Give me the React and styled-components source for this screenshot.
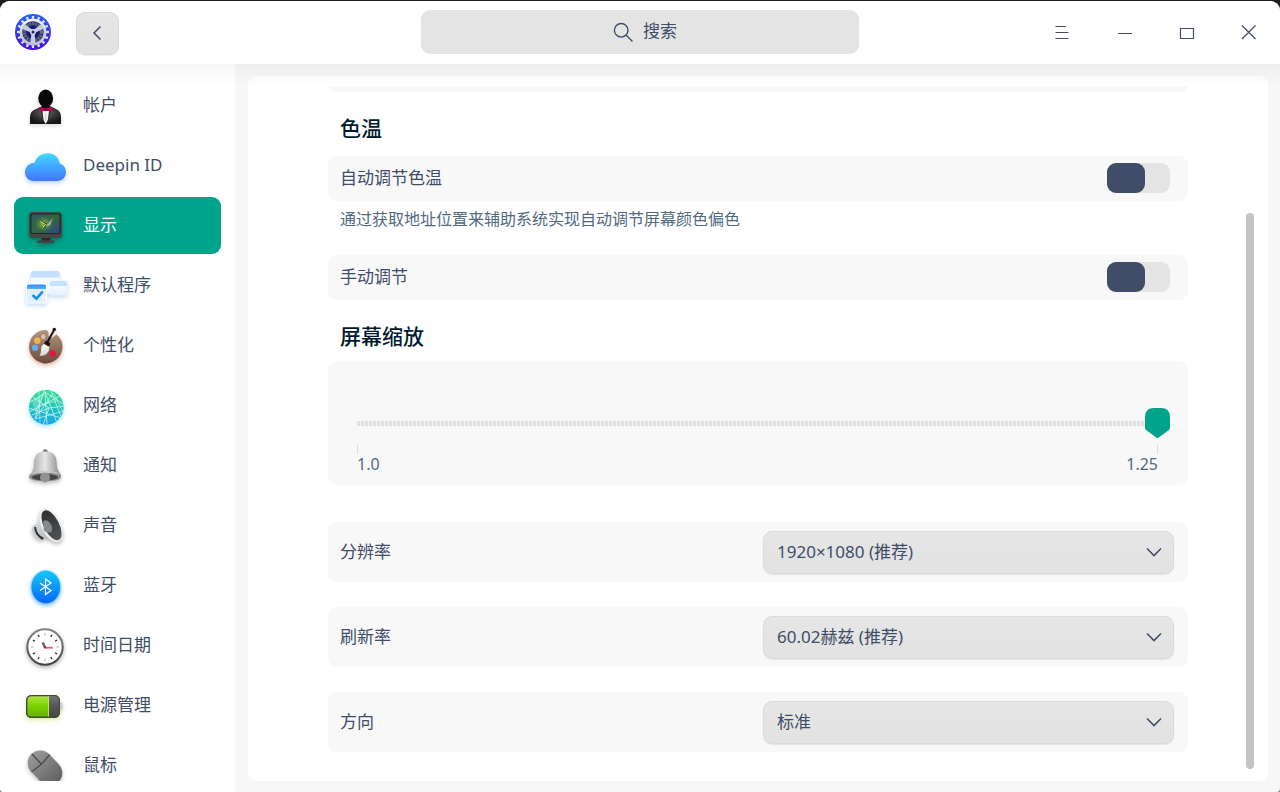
import React, { useState } from "react";
import styled, { createGlobalStyle } from "styled-components";

const INK = "#414d68";
const ACCENT = "#00a48a";
const CARD = "#f8f8f8";

const GlobalStyle = createGlobalStyle`
  * { box-sizing: border-box; }
  html { background: linear-gradient(#1f1c1e 50%, #8c8c8c 50%) fixed; }
  body {
    margin: 0;
    color: ${INK};
    font: 17px/24px "Noto Sans", "Noto Sans CJK SC", sans-serif;
  }
  button, input, select { font: inherit; color: inherit; margin: 0; }
`;

const Window = styled.div`
  display: flex;
  flex-direction: column;
  height: 100vh;
  border-top: 1px solid #1f1c1e;
  border-radius: 10px 10px 4px 4px;
  background: #f7f7f7;
  overflow: hidden;
`;

const TitleBar = styled.header`
  position: relative;
  z-index: 1;
  flex: none;
  display: grid;
  grid-template-columns: 1fr minmax(200px, 438px) 1fr;
  align-items: center;
  height: 63px;
  padding-bottom: 1px;
  background: #fff;
  &::after {
    content: "";
    position: absolute;
    inset: 100% 0 auto 0;
    height: 22px;
    background: linear-gradient(rgba(0, 0, 0, 0.034), rgba(0, 0, 0, 0));
    pointer-events: none;
  }
`;

const TitleStart = styled.div`
  display: flex;
  align-items: center;
  gap: 25px;
  padding-left: 15px;
`;

const BackButton = styled.button`
  display: grid;
  place-items: center;
  width: 43px;
  height: 43px;
  margin-top: 2px;
  padding: 0;
  border: 1px solid #dadada;
  border-radius: 9px;
  background: linear-gradient(#e6e6e6, #e2e2e2);
  box-shadow: 0 1px 1px rgba(0, 0, 0, 0.06);
`;

const SearchBox = styled.div`
  position: relative;
  svg {
    position: absolute;
    left: calc(50% - 27px);
    top: 12px;
  }
`;

const SearchInput = styled.input`
  display: block;
  width: 100%;
  height: 44px;
  padding: 0 0 3px 40px;
  border: 0;
  border-radius: 9px;
  background: #e4e4e4;
  text-align: center;
  outline: 0;
  &::placeholder { color: ${INK}; opacity: 1; }
`;

const WindowControls = styled.div`
  display: flex;
  justify-content: flex-end;
  padding-top: 2px;
`;

const ControlButton = styled.button`
  display: grid;
  place-items: center;
  width: 62px;
  height: 50px;
  padding: 0;
  border: 0;
  background: none;
`;

const Body = styled.div`
  flex: 1;
  display: flex;
  min-height: 0;
`;

const Sidebar = styled.nav`
  flex: none;
  display: flex;
  width: 235px;
  padding: 0 14px 11px;
  background: #fff;
`;

const NavList = styled.ul`
  flex: 1;
  display: flex;
  flex-direction: column;
  gap: 3px;
  margin: 0;
  padding: 13px 0 0;
  list-style: none;
  overflow: hidden;
`;

const NavLink = styled.a`
  display: flex;
  align-items: center;
  gap: 15px;
  height: 57px;
  padding-left: 9px;
  border-radius: 9px;
  text-decoration: none;
  color: ${(p) => (p.$active ? "#fff" : INK)};
  background: ${(p) => (p.$active ? ACCENT : "transparent")};
`;

const NavLabel = styled.span`
  padding-bottom: 2px;
`;

const Panel = styled.main`
  position: relative;
  flex: 1;
  min-width: 0;
  margin: 12px 12px 11px 13px;
  padding: 10px 80px;
  border-radius: 9px;
  background: #fff;
`;

const ScrollArea = styled.div`
  height: 100%;
  overflow: hidden;
`;

const ScrollThumb = styled.div`
  position: absolute;
  top: 137px;
  right: 14px;
  bottom: 12px;
  width: 8px;
  border-radius: 4px;
  background: #c4c4c4;
`;

const CardEnd = styled.div`
  height: 6px;
  border-radius: 0 0 9px 9px;
  background: ${CARD};
`;

const SectionTitle = styled.h2`
  margin: 22px 12px ${(p) => p.$after}px;
  font-size: 21px;
  line-height: 28px;
  font-weight: 500;
  color: #001a2e;
`;

const SwitchCard = styled.div`
  display: flex;
  align-items: center;
  justify-content: space-between;
  height: 45px;
  padding: 0 18px 1px 12px;
  border-radius: 9px;
  background: ${CARD};
`;

const Switch = styled.input`
  appearance: none;
  width: 63px;
  height: 30px;
  border-radius: 9px;
  background: #e4e4e4;
  &::before {
    content: "";
    display: block;
    width: 38px;
    height: 30px;
    border-radius: 9px;
    background: ${INK};
  }
  &:checked::before { margin-left: 25px; background: ${ACCENT}; }
`;

const Hint = styled.p`
  margin: 6px 12px 24px;
  font-size: 16px;
  color: #526a7f;
`;

const ScaleCard = styled.div`
  height: 124px;
  margin-bottom: 37px;
  padding: 47px 18px 0 17px;
  border-radius: 9px;
  background: ${CARD};
`;

const ScaleSlider = styled.input`
  appearance: none;
  display: block;
  width: 100%;
  height: 30px;
  background: none;
  &::-webkit-slider-runnable-track {
    height: 30px;
    background: repeating-linear-gradient(90deg, #e0e0e0 0 3px, #f3f3f3 3px 4px) 12px 13px /
      calc(100% - 24px) 5px no-repeat;
  }
  &::-webkit-slider-thumb {
    appearance: none;
    width: 25px;
    height: 30px;
    background: ${ACCENT};
    clip-path: path("M0 9 Q0 0 9 0 H16 Q25 0 25 9 V20 Q25 21 24 22 L13 30 H12 L1 22 Q0 21 0 20 Z");
  }
`;

const ScaleMarks = styled.div`
  display: flex;
  justify-content: space-between;
  margin: 6px 12px 0;
`;

const ScaleMark = styled.span`
  font-size: 16px;
  line-height: 20px;
  color: #526a7f;
  &::before {
    content: "";
    display: block;
    width: 1px;
    height: 10px;
    margin-left: ${(p) => (p.$end ? "auto" : "0")};
    background: #dcdcdc;
  }
`;

const SelectList = styled.div`
  display: flex;
  flex-direction: column;
  gap: 25px;
`;

const SelectCard = styled.div`
  display: flex;
  align-items: center;
  justify-content: space-between;
  height: 60px;
  padding: 0 14px 0 12px;
  border-radius: 9px;
  background: ${CARD};
`;

const SelectBox = styled.div`
  position: relative;
  width: 411px;
  svg {
    position: absolute;
    right: 12px;
    top: 13px;
    pointer-events: none;
  }
`;

const Select = styled.select`
  appearance: none;
  display: block;
  width: 100%;
  height: 43px;
  padding: 0 40px 0 13px;
  border: 1px solid #dadada;
  border-radius: 9px;
  background: linear-gradient(#e6e6e6, #e2e2e2);
  box-shadow: 0 1px 1px rgba(0, 0, 0, 0.08);
`;

const IconSvg = styled.svg`
  flex: none;
  overflow: visible;
  filter: ${(p) => (p.$glow ? `drop-shadow(0 2px 2px ${p.$glow})` : "none")};
`;

const Grad = ({ id, from, to, mid, x2 = 0, y2 = 1 }) => (
  <linearGradient id={id} x1="0" y1="0" x2={x2} y2={y2}>
    <stop offset="0" stopColor={from} />
    {mid && <stop offset=".5" stopColor={mid} />}
    <stop offset="1" stopColor={to} />
  </linearGradient>
);

const Icon = ({ glow, children }) => (
  <IconSvg width="45" height="45" viewBox="0 -1 45 45" $glow={glow} aria-hidden="true">
    {children}
  </IconSvg>
);

const AccountIcon = () => (
  <Icon glow="rgba(0,0,0,.15)">
    <defs>
      <radialGradient id="suit" cx=".5" cy=".35" r=".6">
        <stop offset="0" stopColor="#666" />
        <stop offset="1" stopColor="#161616" />
      </radialGradient>
    </defs>
    <path d="M7 40V33Q7 27 13 25L19 22H27L33 25Q38 27 38 33V40Z" fill="url(#suit)" />
    <path d="M17 26L22.500 40L28.500 26Z" fill="#303030" />
    <path d="M19.500 27H26L24.800 36L22.700 40L20.600 36Z" fill="#f4f4f4" />
    <path d="M22.700 29V37" stroke="#bbb" strokeWidth=".7" />
    <ellipse cx="22.700" cy="14.500" rx="7.400" ry="9" fill="#090909" />
    <path d="M19 20H26.500V24.500H19Z" fill="#090909" />
    <path d="M17 23L22 24.500H23.500L29 23V28L23.500 26.500H22L17 28Z" fill="#c3004f" />
    <rect x="21.500" y="24" width="2.500" height="3" fill="#88003a" />
  </Icon>
);

const CloudIcon = () => (
  <Icon glow="rgba(60,120,255,.35)">
    <defs><Grad id="cloud" from="#42dcff" mid="#42a5ff" to="#4176ff" /></defs>
    <path d="M11 37C5.500 37 2 33 2 28S6 19 11.500 18.800C13.500 12.500 18.500 9.200 25 9.200C31.500 9.200 36 13.500 36.700 19.500C40.500 20.500 43 24 43 28C43 33 39.500 37 34 37Z" fill="url(#cloud)" />
  </Icon>
);

const DisplayIcon = () => (
  <Icon glow="rgba(0,0,0,.3)">
    <defs>
      <Grad id="screen" from="#2f5a66" mid="#34663f" to="#2b4785" x2={1} />
      <radialGradient id="glow"><stop offset="0" stopColor="#b9e046" /><stop offset="1" stopColor="#5c8a35" stopOpacity="0" /></radialGradient>
    </defs>
    <path d="M18.500 33H27.500V38H18.500Z" fill="#292929" />
    <rect x="14" y="36.500" width="17.500" height="2.500" rx="1" fill="#444" />
    <rect x="6" y="8" width="33" height="26" rx="3.500" fill="#454545" />
    <rect x="7.500" y="9.500" width="30" height="20.500" rx="2" fill="#1b272a" />
    <rect x="8.500" y="10.500" width="28" height="18.500" rx="1.500" fill="url(#screen)" />
    <ellipse cx="21" cy="20" rx="10" ry="8" fill="url(#glow)" opacity=".8" />
    <path d="M17 15L20.500 18L24 19L22 25L21 21Z" fill="#173c22" opacity=".8" />
    <path d="M30 14L25 20L22.500 22.500L27 21Z" fill="#aab8cc" />
    <path d="M17.500 17.500L22.500 20.500L20 23" stroke="#d9ef62" strokeWidth="1" fill="none" />
  </Icon>
);

const DefaultAppsIcon = () => (
  <Icon glow="rgba(50,130,220,.3)">
    <defs><Grad id="pane" from="#fff" to="#e4f0ff" /><Grad id="blueBar" from="#2e90ff" to="#4fb4ff" /></defs>
    <rect x="8" y="7" width="28.500" height="22.500" rx="2.500" fill="#f5faff" />
    <path d="M8 13.500V9.500Q8 7 10.500 7H34Q36.500 7 36.500 9.500V13.500Z" fill="#c4dfff" />
    <rect x="26.500" y="17" width="17.500" height="14.500" rx="2.500" fill="url(#pane)" />
    <path d="M26.500 22V19.500Q26.500 17 29 17H41.500Q44 17 44 19.500V22Z" fill="#c6e1ff" />
    <rect x="3" y="19.500" width="21" height="20" rx="2.500" fill="#fff" />
    <rect x="4" y="24" width="19" height="14.500" rx="1" fill="#e2effd" />
    <path d="M4 25V22Q4 20.500 5.500 20.500H21.500Q23 20.500 23 22V25Z" fill="url(#blueBar)" />
    <path d="M9.500 31L13.500 34.700L19.700 27.500" fill="none" stroke="#128cff" strokeWidth="2.600" />
  </Icon>
);

const PaletteIcon = () => (
  <Icon glow="rgba(190,70,30,.45)">
    <defs><Grad id="wood" from="#b29880" to="#6b4a3e" /><Grad id="bristle" from="#fff" to="#d5d5d5" /></defs>
    <path d="M22 6A16.700 16.700 0 1 0 38.500 17Q37 13 33.500 10.500L29 14Q25 14 25.500 10Q26 6.300 22 6Z" fill="url(#wood)" />
    <ellipse cx="20.300" cy="12.700" rx="2.600" ry="3" fill="#dcc3b4" stroke="#97725e" strokeWidth=".7" />
    <circle cx="14.300" cy="16.700" r="3.300" fill="#f3b43b" />
    <circle cx="12" cy="23.700" r="3.100" fill="#65acec" />
    <circle cx="29.700" cy="29.500" r="3.300" fill="#e3153e" />
    <circle cx="31.300" cy="5.500" r="1.700" fill="#171717" />
    <path d="M31.300 5.500L24.500 18" stroke="#171717" strokeWidth="2" />
    <path d="M23 16.500L27.500 19.500L25.800 22.500L21 19.500Z" fill="#151515" />
    <path d="M20.800 20L26.300 23Q26.500 27 23.500 30Q20.500 32.500 16.500 31.500Q18.300 29 18 26Q18 22 20.800 20Z" fill="url(#bristle)" />
  </Icon>
);

const NetworkIcon = () => (
  <Icon glow="rgba(0,200,230,.4)">
    <defs>
      <Grad id="globe" from="#35e391" to="#16a5e8" />
      <clipPath id="globeClip"><circle cx="23.300" cy="23.300" r="17.300" /></clipPath>
    </defs>
    <circle cx="23.300" cy="23.300" r="17.300" fill="url(#globe)" />
    <g clipPath="url(#globeClip)" stroke="#e7fff8" strokeWidth=".8" fill="none" opacity=".85">
      <path d="M22 5L12 34M22 8L34 39M22 8L24 40M22 8L40 20M37 12L6 28M6 24L38 34M10 13L26 24L41 22" />
      <path d="M12 35L30 9M12 35L41 27M28 7L39 35M7 18L22 9M9 31L26 24L20 41" />
      <path d="M31 10L40 28M16 8L17 40M14 22L34 17" strokeWidth=".6" />
    </g>
    <path d="M9 17L20 10L13 30Z" fill="#fff" opacity=".25" />
  </Icon>
);

const BellIcon = () => (
  <Icon glow="rgba(0,0,0,.25)">
    <defs><Grad id="bell" from="#9b9b9b" mid="#e6e6e6" to="#858585" x2={1} y2={0} /></defs>
    <circle cx="22.300" cy="7.500" r="2.300" fill="#777" />
    <path d="M6 33Q6 31 9 28Q11 25 11 19Q11 7.500 22.300 7.500T33.700 19Q33.700 25 36 28Q38 30.500 38 33Q36 37.500 22 37.500T6 33Z" fill="url(#bell)" />
    <ellipse cx="22" cy="33" rx="16" ry="4.300" fill="#8f8f8f" />
    <ellipse cx="22" cy="33.300" rx="13" ry="3.200" fill="#454545" />
    <circle cx="22" cy="33.500" r="5" fill="#929292" />
    <path d="M8 29.500Q22 25 36 29.500" stroke="#c9c9c9" fill="none" />
  </Icon>
);

const SoundIcon = () => (
  <Icon glow="rgba(0,0,0,.3)">
    <defs><Grad id="cone" from="#2e3033" to="#505357" /><Grad id="metal" from="#eee" to="#b5b9bd" /></defs>
    <ellipse cx="15" cy="28" rx="5" ry="8" transform="rotate(-32 15 28)" fill="#c9cbd0" />
    <path d="M12.500 23Q12 29 20 35" stroke="#303134" strokeWidth="2.500" fill="none" />
    <path d="M18 5L13 23Q14 31 20 33L36 38Z" fill="url(#metal)" />
    <ellipse cx="28" cy="21.500" rx="9.300" ry="18" transform="rotate(-27 28 21.500)" fill="#ededed" />
    <ellipse cx="28.500" cy="21.300" rx="7.600" ry="16.300" transform="rotate(-27 28.500 21.300)" fill="url(#cone)" />
    <path d="M20 18Q21 15 25 17Q30 21 29 27Q27 30 21 27Z" fill="#85888d" />
  </Icon>
);

const BluetoothIcon = () => (
  <Icon glow="rgba(0,130,255,.55)">
    <defs><Grad id="bt" from="#12c8f8" to="#0566ff" /></defs>
    <ellipse cx="22.800" cy="23" rx="15.500" ry="17.300" fill="#55b8ff" opacity=".35" />
    <ellipse cx="22.800" cy="23" rx="14.300" ry="16.300" fill="url(#bt)" />
    <path d="M17 19L28 26.500L22.500 30.500V15L28 19L17 26.500" fill="none" stroke="#fff" strokeWidth="1.200" />
  </Icon>
);

const ClockIcon = () => (
  <Icon glow="rgba(0,0,0,.3)">
    <defs><Grad id="rim" from="#858585" to="#444" /></defs>
    <circle cx="22" cy="23" r="17.700" fill="#fff" stroke="url(#rim)" strokeWidth="2" />
    {Array.from({ length: 12 }, (_, i) => (
      <path
        key={i}
        d="M22 9V11.500"
        stroke={i % 3 ? "#222" : "#bbb"}
        strokeWidth="1.200"
        transform={`rotate(${i * 30} 22 23)`}
      />
    ))}
    <path d="M22 23.500L19.700 18.500" stroke="#666" strokeWidth="2.500" />
    <path d="M21.500 23.700H29.800" stroke="#f55b5b" strokeWidth="1.800" />
    <circle cx="22" cy="23.500" r="1" fill="#444" />
  </Icon>
);

const BatteryIcon = () => (
  <Icon glow="rgba(150,220,0,.4)">
    <defs><Grad id="green" from="#aee638" mid="#79cf00" to="#64b500" /><Grad id="shell" from="#777" mid="#555" to="#454545" /></defs>
    <ellipse cx="37" cy="22.500" rx="3" ry="4.500" fill="#d0d0d0" />
    <rect x="3" y="11" width="34" height="23" rx="5" fill="url(#shell)" />
    <path d="M26 12.500H8Q4.500 12.500 4.500 16V29Q4.500 32.500 8 32.500H26Z" fill="url(#green)" />
    <path d="M25.500 12.500V32.500" stroke="#c5ee67" strokeWidth=".8" />
    <rect x="3.500" y="11.500" width="33" height="22" rx="5" fill="none" stroke="#424b38" />
  </Icon>
);

const MouseIcon = () => (
  <Icon glow="rgba(0,0,0,.25)">
    <defs><Grad id="mouse" from="#9a9a9a" to="#606060" /></defs>
    <g transform="rotate(-43 22 24)">
      <rect x="9.500" y="4.500" width="25" height="39" rx="12.500" fill="url(#mouse)" />
      <path d="M9.500 17.500Q22 20 34.500 17.500M22 4.500V18.500" stroke="#484848" strokeWidth="1.200" fill="none" />
    </g>
  </Icon>
);

const NAV = [
  ["帐户", AccountIcon],
  ["Deepin ID", CloudIcon],
  ["显示", DisplayIcon],
  ["默认程序", DefaultAppsIcon],
  ["个性化", PaletteIcon],
  ["网络", NetworkIcon],
  ["通知", BellIcon],
  ["声音", SoundIcon],
  ["蓝牙", BluetoothIcon],
  ["时间日期", ClockIcon],
  ["电源管理", BatteryIcon],
  ["鼠标", MouseIcon],
];

const SELECTS = [
  ["resolution", "分辨率", "1920×1080 (推荐)"],
  ["refresh", "刷新率", "60.02赫兹 (推荐)"],
  ["rotation", "方向", "标准"],
];

const Logo = () => (
  <svg width="36" height="36" viewBox="0 0 36 36" aria-hidden="true">
    <defs><Grad id="logo" from="#2764ff" to="#4a10d8" /><Grad id="gear" from="#f1f3ff" to="#b9bdd9" /></defs>
    <circle cx="18" cy="18" r="18" fill="url(#logo)" />
    {Array.from({ length: 16 }, (_, i) => (
      <path key={i} d="M16.500 6L17 2H19L19.500 6Z" fill="url(#gear)" transform={`rotate(${i * 22.5} 18 18)`} />
    ))}
    <circle cx="18" cy="18" r="12" fill="#2a2d66" stroke="url(#gear)" strokeWidth="2.600" />
    <circle cx="18" cy="18" r="8.500" fill="none" stroke="#666d80" strokeWidth="3" strokeDasharray="2 1" />
    <circle cx="18" cy="18" r="6" fill="#171a72" />
    {[60, 180, 300].map((a) => (
      <path key={a} d="M16.500 18L15.500 6.500H20.500L19.500 18Z" fill="#c8cce3" transform={`rotate(${a} 18 18)`} />
    ))}
    <circle cx="18" cy="18" r="3" fill="#cfd3e8" />
    <circle cx="18" cy="18" r="1.500" fill="#25246c" />
  </svg>
);

const Stroke = ({ size, d, width = 1.3 }) => (
  <svg width={size} height={size} viewBox={`0 0 ${size} ${size}`} fill="none" stroke={INK} strokeWidth={width} aria-hidden="true">
    <path d={d} />
  </svg>
);

const CONTROLS = [
  ["菜单", "M2.500 3.500H13M2.500 9.500H15.500M2.500 15.500H15.500"],
  ["最小化", "M3 10.500H17"],
  ["最大化", "M3.500 5.500H16.500V15.500H3.500Z"],
  ["关闭", "M3 2.500L16.500 16M16.500 2.500L3 16"],
];

export default function App() {
  const [auto, setAuto] = useState(false);
  const [manual, setManual] = useState(false);
  const [scale, setScale] = useState(1.25);

  return (
    <>
      <GlobalStyle />
      <Window>
        <TitleBar>
          <TitleStart>
            <Logo />
            <BackButton type="button" aria-label="返回">
              <Stroke size={20} d="M12.500 3.500L6 10L12.500 16.500" width={1.5} />
            </BackButton>
          </TitleStart>
          <SearchBox>
            <SearchInput type="text" aria-label="搜索" placeholder="搜索" />
            <Stroke size={21} d="M15 8.300A6.800 6.800 0 1 1 1.400 8.300A6.800 6.800 0 1 1 15 8.300M13 13L19.500 19.500" width={1.4} />
          </SearchBox>
          <WindowControls>
            {CONTROLS.map(([label, d]) => (
              <ControlButton key={label} type="button" aria-label={label}>
                <Stroke size={20} d={d} width={1.2} />
              </ControlButton>
            ))}
          </WindowControls>
        </TitleBar>
        <Body>
          <Sidebar>
            <NavList>
              {NAV.map(([label, NavIcon]) => (
                <li key={label}>
                  <NavLink href="#" $active={label === "显示"}>
                    <NavIcon />
                    <NavLabel>{label}</NavLabel>
                  </NavLink>
                </li>
              ))}
            </NavList>
          </Sidebar>
          <Panel>
            <ScrollArea>
              <CardEnd />
              <SectionTitle $after={14}>色温</SectionTitle>
              <SwitchCard>
                <label htmlFor="auto">自动调节色温</label>
                <Switch id="auto" type="checkbox" checked={auto} onChange={() => setAuto(!auto)} />
              </SwitchCard>
              <Hint>通过获取地址位置来辅助系统实现自动调节屏幕颜色偏色</Hint>
              <SwitchCard>
                <label htmlFor="manual">手动调节</label>
                <Switch id="manual" type="checkbox" checked={manual} onChange={() => setManual(!manual)} />
              </SwitchCard>
              <SectionTitle $after={11} id="scale-title">屏幕缩放</SectionTitle>
              <ScaleCard>
                <ScaleSlider
                  type="range"
                  aria-labelledby="scale-title"
                  min="1"
                  max="1.25"
                  step="0.25"
                  value={scale}
                  onChange={(e) => setScale(Number(e.target.value))}
                />
                <ScaleMarks>
                  <ScaleMark>1.0</ScaleMark>
                  <ScaleMark $end>1.25</ScaleMark>
                </ScaleMarks>
              </ScaleCard>
              <SelectList>
                {SELECTS.map(([id, label, value]) => (
                  <SelectCard key={id}>
                    <label htmlFor={id}>{label}</label>
                    <SelectBox>
                      <Select id={id}>
                        <option>{value}</option>
                      </Select>
                      <Stroke size={16} d="M1 4.500L8 11.500L15 4.500" width={1.6} />
                    </SelectBox>
                  </SelectCard>
                ))}
              </SelectList>
            </ScrollArea>
            <ScrollThumb />
          </Panel>
        </Body>
      </Window>
    </>
  );
}
